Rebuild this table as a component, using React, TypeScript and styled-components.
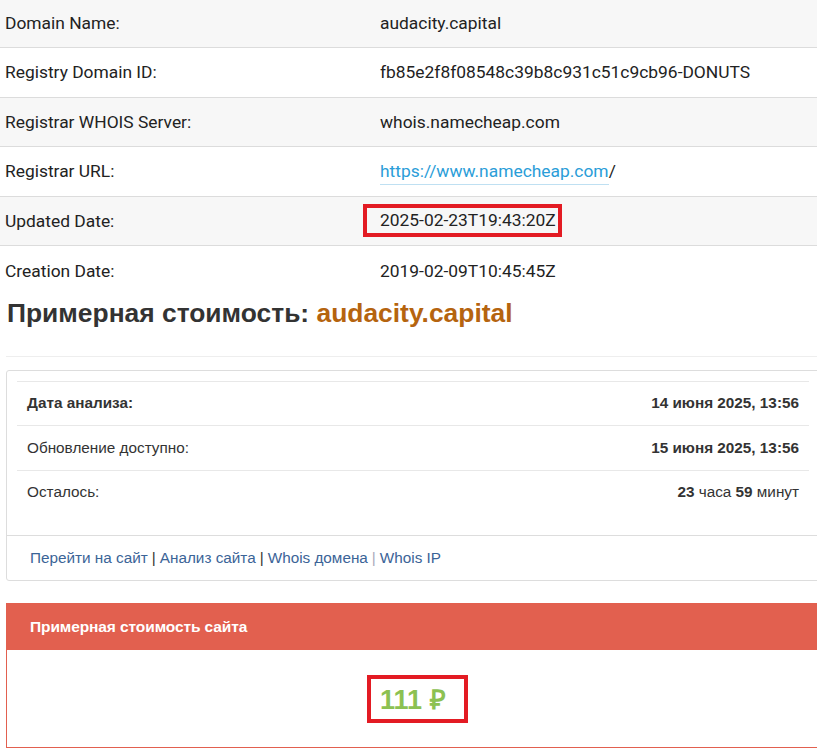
import React from "react";
import styled, { createGlobalStyle } from "styled-components";

const Global = createGlobalStyle`
  html, body { margin: 0; padding: 0; background: #fff; overflow: hidden; }
  * { box-sizing: border-box; }
`;

const Page = styled.div`
  width: 830px;
`;

const WhoisTable = styled.div`
  margin-top: -1.5px;
  font-family: Roboto, "Liberation Sans", sans-serif;
  font-size: 17.4px;
  color: #222;
`;

const WhoisRow = styled.div<{ $shade?: boolean; $last?: boolean }>`
  display: grid;
  grid-template-columns: 380px 1fr;
  align-items: center;
  height: 49.5px;
  background: ${(p) => (p.$shade ? "#f7f7f7" : "#fff")};
  border-bottom: ${(p) => (p.$last ? "none" : "1px solid #dcdcdc")};
`;

const WhoisLabel = styled.div`
  padding-left: 5px;
`;

const WhoisValue = styled.div`
  white-space: nowrap;
`;

const UrlLink = styled.a`
  color: #2a9dd8;
  text-decoration: none;
  border-bottom: 1px solid #bfe0f2;
  padding-bottom: 3px;
`;

const Highlight = styled.span`
  display: inline-block;
  border: 4px solid #e31b23;
  margin-left: -17px;
  padding: 1px 2px 1px 13px;
  line-height: 23px;
`;

const Section = styled.div`
  margin-left: 6px;
  width: 814px;
  font-family: "Liberation Sans", Arial, sans-serif;
  color: #333;
`;

const Heading = styled.h2`
  margin: 2px 0 0 1px;
  font-size: 26.4px;
  line-height: 30px;
  font-weight: bold;
  color: #333;
`;

const Domain = styled.span`
  color: #b5640f;
`;

const Rule = styled.hr`
  margin: 28px 0 13px 0;
  border: 0;
  border-top: 1px solid #eee;
`;

const Card = styled.div`
  border: 1px solid #ddd;
  border-radius: 3px;
  font-size: 15.3px;
`;

const CardBody = styled.div`
  padding: 10px 10px 21px 10px;
`;

const InfoRow = styled.div`
  display: flex;
  justify-content: space-between;
  align-items: center;
  height: 44.5px;
  padding: 0 10px;
  border-top: 1px solid #e8e8e8;
`;

const InfoLabel = styled.span<{ $bold?: boolean }>`
  font-weight: ${(p) => (p.$bold ? "bold" : "normal")};
`;

const Strong = styled.b`
  font-weight: bold;
`;

const CardFooter = styled.div`
  border-top: 1px solid #ddd;
  height: 45px;
  display: flex;
  align-items: center;
  padding-left: 23px;
  color: #333;
`;

const FooterLink = styled.a`
  color: #3b6497;
  text-decoration: none;
`;

const Sep = styled.span<{ $light?: boolean }>`
  color: ${(p) => (p.$light ? "#aab" : "#333")};
  margin: 0 4px;
`;

const PricePanel = styled.div`
  margin-top: 22px;
  border: 1px solid #e2604f;
  border-top: 0;
`;

const PriceHeader = styled.div`
  background: #e2604f;
  color: #fff;
  height: 47px;
  display: flex;
  align-items: center;
  padding-left: 23px;
  font-size: 15.5px;
  font-weight: bold;
  letter-spacing: -0.1px;
`;

const PriceBody = styled.div`
  height: 97px;
  display: flex;
  justify-content: center;
  align-items: center;
  padding-left: 9px;
`;

const PriceBox = styled.div`
  border: 4px solid #e31b23;
  width: 101px;
  height: 48px;
  display: flex;
  align-items: center;
  padding-left: 9px;
  color: #8cc152;
  font-size: 27px;
  font-weight: bold;
  white-space: nowrap;
`;

const whois: { label: string; value: React.ReactNode }[] = [
  { label: "Domain Name:", value: "audacity.capital" },
  { label: "Registry Domain ID:", value: "fb85e2f8f08548c39b8c931c51c9cb96-DONUTS" },
  { label: "Registrar WHOIS Server:", value: "whois.namecheap.com" },
  {
    label: "Registrar URL:",
    value: (
      <>
        <UrlLink href="#">https://www.namecheap.com</UrlLink>/
      </>
    ),
  },
  { label: "Updated Date:", value: <Highlight>2025-02-23T19:43:20Z</Highlight> },
  { label: "Creation Date:", value: "2019-02-09T10:45:45Z" },
];

export default function App() {
  return (
    <Page>
      <Global />
      <WhoisTable>
        {whois.map((r, i) => (
          <WhoisRow key={r.label} $shade={i % 2 === 0} $last={i === whois.length - 1}>
            <WhoisLabel>{r.label}</WhoisLabel>
            <WhoisValue>{r.value}</WhoisValue>
          </WhoisRow>
        ))}
      </WhoisTable>
      <Section>
        <Heading>
          Примерная стоимость: <Domain>audacity.capital</Domain>
        </Heading>
        <Rule />
        <Card>
          <CardBody>
            <InfoRow>
              <InfoLabel $bold>Дата анализа:</InfoLabel>
              <Strong>14 июня 2025, 13:56</Strong>
            </InfoRow>
            <InfoRow>
              <InfoLabel>Обновление доступно:</InfoLabel>
              <Strong>15 июня 2025, 13:56</Strong>
            </InfoRow>
            <InfoRow>
              <InfoLabel>Осталось:</InfoLabel>
              <span>
                <Strong>23</Strong> часа <Strong>59</Strong> минут
              </span>
            </InfoRow>
          </CardBody>
          <CardFooter>
            <FooterLink href="#">Перейти на сайт</FooterLink>
            <Sep>|</Sep>
            <FooterLink href="#">Анализ сайта</FooterLink>
            <Sep>|</Sep>
            <FooterLink href="#">Whois домена</FooterLink>
            <Sep $light>|</Sep>
            <FooterLink href="#">Whois IP</FooterLink>
          </CardFooter>
        </Card>
        <PricePanel>
          <PriceHeader>Примерная стоимость сайта</PriceHeader>
          <PriceBody>
            <PriceBox>111 ₽</PriceBox>
          </PriceBody>
        </PricePanel>
      </Section>
    </Page>
  );
}
